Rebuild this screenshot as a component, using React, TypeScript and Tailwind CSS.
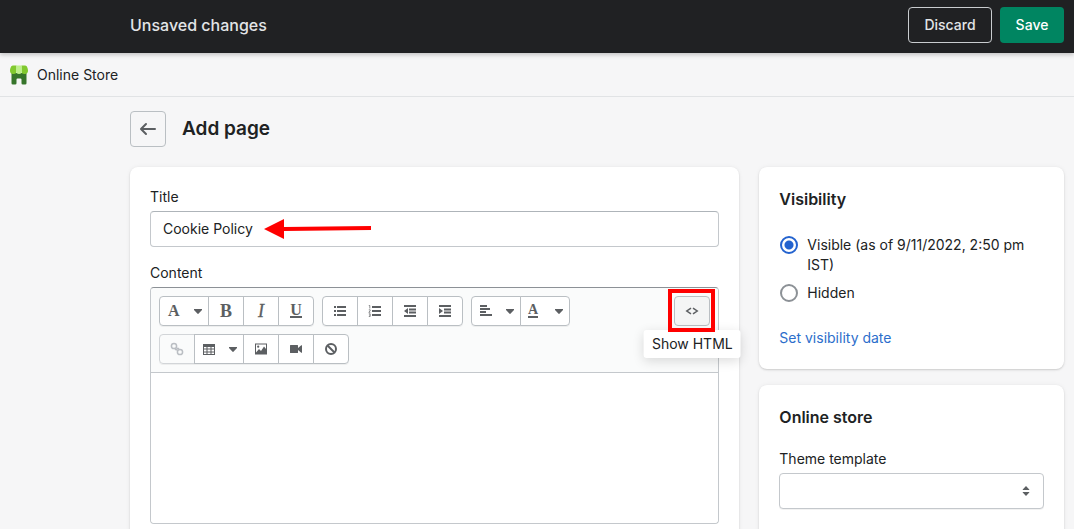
import { useState } from "react";
import type { ReactNode } from "react";
import clsx from "clsx";

interface ToolButtonProps {
  label: string;
  caret?: boolean;
  disabled?: boolean;
  children: ReactNode;
}

function Caret() {
  return (
    <svg viewBox="0 0 8 5" className="h-[5px] w-2" fill="currentColor">
      <path d="M.3 0h7.400a.5.5 0 0 1 .3.900L4.400 4.800a.6.6 0 0 1-.8 0L0 .9A.5.5 0 0 1 .3 0Z" />
    </svg>
  );
}

function ToolButton({ label, caret, disabled, children }: ToolButtonProps) {
  return (
    <button
      type="button"
      aria-label={label}
      disabled={disabled}
      className={clsx(
        "-ml-px flex h-[30px] items-center border first:ml-0 first:rounded-l last:rounded-r",
        caret ? "w-[50px] justify-between pr-[6px] pl-[7px]" : "w-9 justify-center",
        disabled
          ? "border-[#d2d5d8] bg-[#fafbfb] text-[#babec3]"
          : "relative border-[#babfc3] bg-white text-[#5c5f62]"
      )}
    >
      {children}
      {caret && <Caret />}
    </button>
  );
}

function ToolGroup({ children }: { children: ReactNode }) {
  return <div className="flex rounded shadow-[0_1px_0_rgba(0,0,0,0.05)]">{children}</div>;
}

function Icon({ children }: { children: ReactNode }) {
  return (
    <svg viewBox="0 0 14 14" className="size-[14px]" fill="currentColor">
      {children}
    </svg>
  );
}

function Glyph({ children, className }: { children: ReactNode; className?: string }) {
  return (
    <span className={clsx("font-['Liberation_Serif',serif] leading-4 font-bold", className)}>
      {children}
    </span>
  );
}

function Toolbar() {
  return (
    <div className="flex items-start justify-between rounded-t border-b border-[#c4c8cc] bg-[#fafbfb] p-2">
      <div className="flex max-w-[420px] flex-wrap gap-2">
        <ToolGroup>
          <ToolButton label="Formatting" caret>
            <Glyph className="pl-px text-base">A</Glyph>
          </ToolButton>
          <ToolButton label="Bold">
            <Glyph className="text-lg">B</Glyph>
          </ToolButton>
          <ToolButton label="Italic">
            <span className="font-['Liberation_Serif',serif] text-lg leading-4 italic [-webkit-text-stroke:0.300px_currentColor]">
              I
            </span>
          </ToolButton>
          <ToolButton label="Underline">
            <Glyph className="border-b-2 text-base leading-[12px]">U</Glyph>
          </ToolButton>
        </ToolGroup>
        <ToolGroup>
          <ToolButton label="Bulleted list">
            <Icon>
              <path d="M1 2h2v2H1zM4 2h9v2H4zM1 6h2v2H1zM4 6h9v2H4zM1 10h2v2H1zM4 10h9v2H4z" />
            </Icon>
          </ToolButton>
          <ToolButton label="Numbered list">
            <Icon>
              <path d="M4 2h9v2H4zM4 6h9v2H4zM4 10h9v2H4z" />
              <path
                d="M.8 1.500h1v3M.8 5.800h1.400v1L.8 8.300h1.600M.8 9.800h1.400v2.700H.8M1.200 11.100h1"
                fill="none"
                stroke="currentColor"
                strokeWidth="0.700"
              />
            </Icon>
          </ToolButton>
          <ToolButton label="Outdent">
            <Icon>
              <path d="M1 1h12v2H1zM6 4.500h7v2H6zM6 7.500h7v2H6zM1 11h12v2H1zM5 4v6L1 7z" />
            </Icon>
          </ToolButton>
          <ToolButton label="Indent">
            <Icon>
              <path d="M1 1h12v2H1zM6 4.500h7v2H6zM6 7.500h7v2H6zM1 11h12v2H1zM1 4v6l4-3z" />
            </Icon>
          </ToolButton>
        </ToolGroup>
        <ToolGroup>
          <ToolButton label="Alignment" caret>
            <Icon>
              <path d="M1 1h7v2H1zM1 4h10v2H1zM1 7h6v2H1zM1 10h12v2H1z" />
            </Icon>
          </ToolButton>
          <ToolButton label="Color" caret>
            <Glyph className="border-b-2 text-sm leading-[12px]">A</Glyph>
          </ToolButton>
        </ToolGroup>
        <ToolGroup>
          <ToolButton label="Insert link" disabled>
            <Icon>
              <g fill="none" stroke="currentColor" strokeWidth="1.500">
                <circle cx="4" cy="4" r="2.600" />
                <circle cx="10" cy="10" r="2.600" />
                <path d="M4.800 7.600c1-.2 2-.1 2.700.6M9.200 6.400c-1 .2-2 .1-2.700-.6" strokeWidth="1.300" />
              </g>
            </Icon>
          </ToolButton>
          <ToolButton label="Insert table" caret>
            <Icon>
              <path
                fillRule="evenodd"
                d="M1 2h12v11H1zM2 5h2.500v1.500H2zM5.500 5h3v1.500h-3zM9.500 5H12v1.500H9.500zM2 7.500h2.500v2H2zM5.500 7.500h3v2h-3zM9.500 7.500H12v2H9.500zM2 10.500h2.500V12H2zM5.500 10.500h3V12h-3zM9.500 10.500H12V12H9.500z"
              />
            </Icon>
          </ToolButton>
          <ToolButton label="Insert image">
            <Icon>
              <path
                fillRule="evenodd"
                d="M1 1.500h12v11H1zM2 2.500v8l3-3.500 2 2 3-4.500 2 2.500V2.500z"
              />
              <circle cx="4.200" cy="4.700" r="1.100" />
            </Icon>
          </ToolButton>
          <ToolButton label="Insert video">
            <Icon>
              <path d="M1.500 3H8.500a.5.5 0 0 1 .5.500V6l3.300-2.700a.4.4 0 0 1 .7.3v6.800a.4.4 0 0 1-.7.3L9 8v2.500a.5.5 0 0 1-.5.500h-7a.5.5 0 0 1-.5-.5v-7A.5.5 0 0 1 1.500 3Z" />
            </Icon>
          </ToolButton>
          <ToolButton label="Clear formatting">
            <Icon>
              <g fill="none" stroke="currentColor" strokeWidth="2">
                <circle cx="7" cy="7" r="5" />
                <path d="M3.500 3.500l7 7" />
              </g>
            </Icon>
          </ToolButton>
        </ToolGroup>
      </div>

      <div className="relative">
        <button
          type="button"
          aria-describedby="html-tip"
          aria-label="Show HTML"
          className="flex h-[30px] w-9 items-center justify-center rounded border border-[#babfc3] bg-[#f4f5f5] text-[#5c5f62]"
        >
          <svg viewBox="0 0 14 8" className="h-2 w-[14px]" fill="none" stroke="currentColor" strokeWidth="1.500">
            <path d="M6 1.200L1.800 4 6 6.800M8 1.200L12.200 4 8 6.800" />
          </svg>
        </button>
        <div
          id="html-tip"
          role="tooltip"
          className="absolute top-[34px] left-1/2 -translate-x-1/2 rounded-[3px] bg-white px-2 py-1 text-sm whitespace-nowrap shadow-[0_3px_12px_rgba(0,0,0,0.14)]"
        >
          Show HTML
        </div>
        <div className="pointer-events-none absolute -top-[7px] -right-[5px] -bottom-[6px] -left-[6px] border-4 border-[#ff0000]" />
      </div>
    </div>
  );
}

function Card({ children }: { children: ReactNode }) {
  return (
    <section className="rounded-lg bg-white p-5 shadow-[0_0_5px_rgba(23,24,24,0.05),0_1px_2px_rgba(0,0,0,0.15)]">
      {children}
    </section>
  );
}

const radioClass =
  "mt-px size-[18px] shrink-0 appearance-none rounded-full border-2 border-[#8c9196] bg-white checked:border-[#2463cf] checked:bg-[radial-gradient(circle,#2463cf_4px,white_5px)]";

export default function App() {
  const [title, setTitle] = useState("Cookie Policy");
  const [content, setContent] = useState("");
  const [visible, setVisible] = useState(true);

  return (
    <div className="min-h-screen bg-[#f6f6f7] font-['Inter',sans-serif] text-sm text-[#202223]">
      <header className="relative flex h-[53px] items-center justify-between bg-[#202123] pr-[10px] pb-[3px] pl-[130px] shadow-[0_2px_4px_rgba(0,0,0,0.2)]">
        <h2 className="text-base font-medium text-[#e3e5e7]">Unsaved changes</h2>
        <div className="flex gap-2">
          <button
            type="button"
            className="h-9 w-[84px] rounded border border-[#c9cccf] font-medium text-[#e3e5e7]"
          >
            Discard
          </button>
          <button type="button" className="h-9 w-16 rounded bg-[#008561] font-medium text-white">
            Save
          </button>
        </div>
      </header>

      <div className="flex h-11 items-center gap-2 border-b border-[#e1e3e5] px-[9px]">
        <svg viewBox="0 0 20 20" className="size-5">
          <path d="M2.500 8h15v10.200a1.300 1.300 0 0 1-1.300 1.300h-2.400a1.300 1.300 0 0 1-1.300-1.300V14.500a1 1 0 0 0-1-1h-3a1 1 0 0 0-1 1v3.700a1.300 1.300 0 0 1-1.300 1.300H3.800a1.300 1.300 0 0 1-1.300-1.300z" fill="#36752b" />
          <path d="M4.200.5H7.500v6A2.800 2.800 0 0 1 4.500 9 3.300 3.300 0 0 1 1 6c0-2 .6-3.600 1.300-4.700A2.200 2.200 0 0 1 4.200.5z" fill="#81c92f" />
          <path d="M15.800.5H12.500v6a2.800 2.800 0 0 0 3 2.500A3.300 3.300 0 0 0 19 6c0-2-.6-3.600-1.300-4.700A2.200 2.200 0 0 0 15.800.5z" fill="#81c92f" />
          <path d="M7.500.5h5L13 6a3 3 0 0 1-6 0z" fill="#bdf08b" />
        </svg>
        <span>Online Store</span>
      </div>

      <div className="pt-[14px] pr-[10px] pb-5 pl-[130px]">
        <div className="mb-5 flex items-center gap-4">
          <button
            type="button"
            aria-label="Back"
            className="flex size-9 items-center justify-center rounded border border-[#babfc3] text-[#5c5f62]"
          >
            <svg
              viewBox="0 0 20 20"
              className="size-5"
              fill="none"
              stroke="currentColor"
              strokeWidth="2"
              strokeLinecap="round"
              strokeLinejoin="round"
            >
              <path d="M17 10H3.500M8 5L3 10l5 5" />
            </svg>
          </button>
          <h1 className="text-[19px] font-semibold">Add page</h1>
        </div>

        <div className="flex items-start gap-5">
          <main className="min-w-0 flex-[2]">
            <Card>
              <label htmlFor="title" className="block">
                Title
              </label>
              <div className="relative mt-1">
                <input
                  id="title"
                  type="text"
                  value={title}
                  onChange={(e) => setTitle(e.target.value)}
                  className="block h-9 w-full rounded border border-[#c4c8cc] border-t-[#aeb4b9] bg-white px-3 pb-px"
                />
                <svg
                  viewBox="0 0 108 20"
                  className="pointer-events-none absolute top-2 left-[114px] h-5 w-[108px]"
                  fill="#ff0000"
                >
                  <path d="M0 10L20 0v8l87-1v4l-87 1v8z" />
                </svg>
              </div>
              <label htmlFor="content" className="mt-4 block">
                Content
              </label>
              <div className="mt-1 rounded border border-[#c4c8cc] border-t-[#8c9196]">
                <Toolbar />
                <textarea
                  id="content"
                  value={content}
                  onChange={(e) => setContent(e.target.value)}
                  className="block h-[150px] w-full resize-none rounded-b bg-white p-3"
                />
              </div>
            </Card>
          </main>

          <aside className="flex min-w-0 flex-1 flex-col gap-4">
            <Card>
              <h2 className="text-base font-semibold">Visibility</h2>
              <div className="mt-6 flex flex-col gap-2">
                <label className="flex gap-[9px] pl-px">
                  <input
                    type="radio"
                    name="visibility"
                    checked={visible}
                    onChange={() => setVisible(true)}
                    className={radioClass}
                  />
                  Visible (as of 9/11/2022, 2:50 pm IST)
                </label>
                <label className="flex gap-[9px] pl-px">
                  <input
                    type="radio"
                    name="visibility"
                    checked={!visible}
                    onChange={() => setVisible(false)}
                    className={radioClass}
                  />
                  Hidden
                </label>
              </div>
              <a href="#" className="mt-[25px] inline-block pb-px text-[#2c6ecb]">
                Set visibility date
              </a>
            </Card>

            <Card>
              <h2 className="text-base font-semibold">Online store</h2>
              <label htmlFor="template" className="mt-5 block">
                Theme template
              </label>
              <div className="relative mt-1 mb-5">
                <select
                  id="template"
                  className="block h-9 w-full appearance-none rounded border border-[#c4c8cc] bg-white px-3 shadow-[0_1px_0_rgba(0,0,0,0.05)]"
                >
                  <option value="" />
                </select>
                <svg
                  viewBox="0 0 8 10"
                  className="pointer-events-none absolute top-[13px] right-[14px] h-[10px] w-2"
                  fill="#5c5f62"
                >
                  <path d="M4 0l3.300 3.500a.3.3 0 0 1-.3.500H1a.3.3 0 0 1-.3-.5zM4 10l3.300-3.500A.3.3 0 0 0 7 6H1a.3.3 0 0 0-.3.500z" />
                </svg>
              </div>
            </Card>
          </aside>
        </div>
      </div>
    </div>
  );
}
